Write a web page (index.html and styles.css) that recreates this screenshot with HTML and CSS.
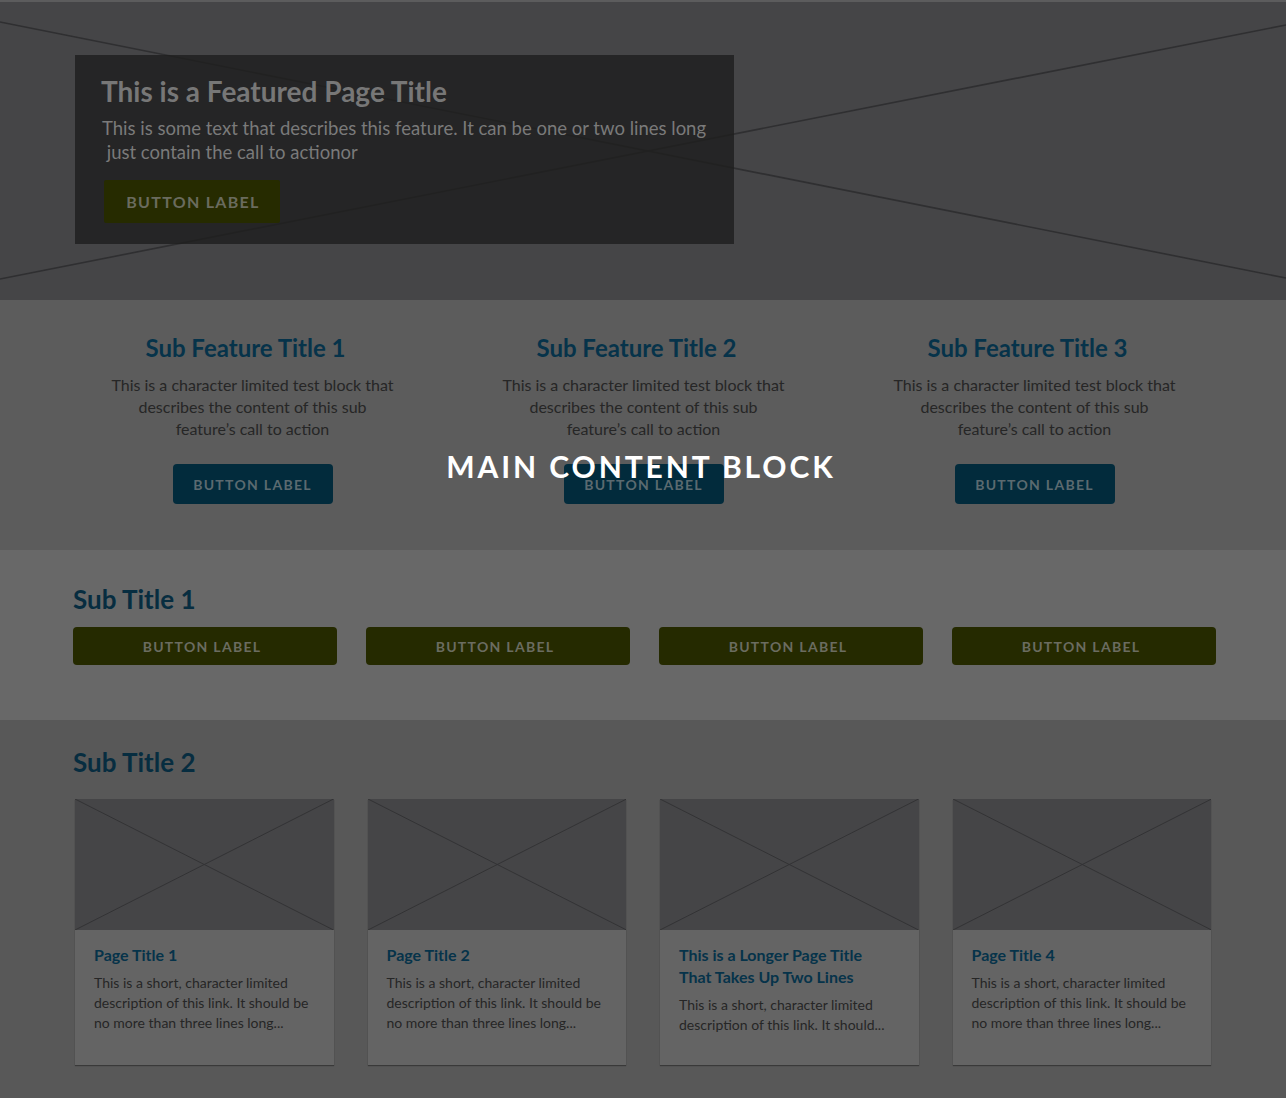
FILE: index.html
```html
<!DOCTYPE html>
<html lang="en">
<head>
<meta charset="utf-8">
<title>Wireframe</title>
<link rel="stylesheet" href="styles.css">
</head>
<body>
<div class="page">
  <div class="topline"></div>
  <section class="hero">
    <svg class="hero-x" viewBox="0 0 1286 298" preserveAspectRatio="none" aria-hidden="true">
      <line x1="0" y1="20" x2="1286" y2="276"/>
      <line x1="0" y1="277" x2="1286" y2="23"/>
    </svg>
    <div class="feature">
      <h1 class="feature-title">This is a Featured Page Title</h1>
      <p class="feature-text">This is some text that describes this feature. It can be one or two lines long<br>&nbsp;just contain the call to actionor</p>
      <a class="btn btn-hero">BUTTON LABEL</a>
    </div>
  </section>

  <section class="subfeatures">
    <div class="sf">
      <h2 class="sf-title">Sub Feature Title 1</h2>
      <p class="sf-text">This is a character limited test block that<br>describes the content of this sub<br>feature’s call to action</p>
      <a class="btn btn-blue">BUTTON LABEL</a>
    </div>
    <div class="sf">
      <h2 class="sf-title">Sub Feature Title 2</h2>
      <p class="sf-text">This is a character limited test block that<br>describes the content of this sub<br>feature’s call to action</p>
      <a class="btn btn-blue">BUTTON LABEL</a>
    </div>
    <div class="sf">
      <h2 class="sf-title">Sub Feature Title 3</h2>
      <p class="sf-text">This is a character limited test block that<br>describes the content of this sub<br>feature’s call to action</p>
      <a class="btn btn-blue">BUTTON LABEL</a>
    </div>
  </section>

  <section class="links">
    <h2 class="sub-title">Sub Title 1</h2>
    <div class="link-row">
      <a class="btn btn-green">BUTTON LABEL</a>
      <a class="btn btn-green">BUTTON LABEL</a>
      <a class="btn btn-green">BUTTON LABEL</a>
      <a class="btn btn-green">BUTTON LABEL</a>
    </div>
  </section>

  <section class="cards-section">
    <h2 class="sub-title sub-title-2">Sub Title 2</h2>
    <div class="cards">
      <div class="card">
        <div class="card-img"><svg viewBox="0 0 100 100" preserveAspectRatio="none" aria-hidden="true"><line x1="0" y1="0" x2="100" y2="100"/><line x1="0" y1="100" x2="100" y2="0"/></svg></div>
        <div class="card-body">
          <h3 class="card-title">Page Title 1</h3>
          <p class="card-text">This is a short, character limited description of this link. It should be no more than three lines long...</p>
        </div>
      </div>
      <div class="card">
        <div class="card-img"><svg viewBox="0 0 100 100" preserveAspectRatio="none" aria-hidden="true"><line x1="0" y1="0" x2="100" y2="100"/><line x1="0" y1="100" x2="100" y2="0"/></svg></div>
        <div class="card-body">
          <h3 class="card-title">Page Title 2</h3>
          <p class="card-text">This is a short, character limited description of this link. It should be no more than three lines long...</p>
        </div>
      </div>
      <div class="card">
        <div class="card-img"><svg viewBox="0 0 100 100" preserveAspectRatio="none" aria-hidden="true"><line x1="0" y1="0" x2="100" y2="100"/><line x1="0" y1="100" x2="100" y2="0"/></svg></div>
        <div class="card-body">
          <h3 class="card-title">This is a Longer Page Title<br>That Takes Up Two Lines</h3>
          <p class="card-text">This is a short, character limited<br>description of this link. It should...</p>
        </div>
      </div>
      <div class="card">
        <div class="card-img"><svg viewBox="0 0 100 100" preserveAspectRatio="none" aria-hidden="true"><line x1="0" y1="0" x2="100" y2="100"/><line x1="0" y1="100" x2="100" y2="0"/></svg></div>
        <div class="card-body">
          <h3 class="card-title">Page Title 4</h3>
          <p class="card-text">This is a short, character limited description of this link. It should be no more than three lines long...</p>
        </div>
      </div>
    </div>
  </section>

  <div class="overlay-label">MAIN CONTENT BLOCK</div>
</div>
</body>
</html>
```

FILE: styles.css
```css
* { box-sizing: border-box; }
html, body { margin: 0; padding: 0; }
body {
  background: #585858;
  font-family: Lato, "Open Sans", "Liberation Sans", sans-serif;
  color: #282828;
}
.page { position: relative; width: 1286px; overflow: hidden; }
h1, h2, h3, p { margin: 0; }
a { text-decoration: none; }

.topline { height: 2px; background: #5c5c5d; }

/* hero */
.hero {
  position: relative;
  height: 298px;
  background: #454547;
  padding-top: 53px;
  padding-left: 75px;
}
.hero-x {
  position: absolute;
  left: 0; top: 0;
  width: 100%; height: 100%;
}
.hero-x line { stroke: #2f2f31; stroke-width: 1.6; }
.feature {
  position: relative;
  width: 659px;
  height: 189px;
  background: rgba(30, 30, 30, 0.82);
  padding: 19px 0 0 27px;
}
.feature-title {
  font-size: 28px;
  line-height: 34px;
  font-weight: 700;
  color: #777777;
  margin-left: -1px;
}
.feature-text {
  margin-top: 8px;
  font-size: 18.5px;
  line-height: 24px;
  color: #7a7a7a;
}
.btn {
  display: flex;
  align-items: center;
  justify-content: center;
  font-weight: 700;
  letter-spacing: 1.3px;
  white-space: nowrap;
}
.btn-hero {
  margin-top: 16px;
  margin-left: 2px;
  width: 176px;
  height: 43px;
  background: #262b00;
  border-radius: 2px;
  font-size: 16px;
  color: #6a6b5e;
  padding-left: 2px;
}

/* sub features */
.subfeatures {
  height: 250px;
  background: #5c5c5c;
  padding: 33px 0 0 57px;
  display: grid;
  grid-template-columns: repeat(3, 391px);
  align-items: start;
}
.sf { display: flex; flex-direction: column; align-items: center; text-align: center; }
.sf-title {
  font-size: 24px;
  line-height: 30px;
  font-weight: 700;
  color: #06334a;
  padding-right: 14px;
}
.sf-text {
  margin-top: 11px;
  font-size: 16px;
  line-height: 22px;
  color: #262626;
}
.btn-blue {
  margin-top: 24px;
  width: 160px;
  height: 40px;
  background: #022b3c;
  border-radius: 4px;
  font-size: 14px;
  color: #5b6a70;
}

/* links */
.links {
  height: 170px;
  background: #686868;
  padding: 33px 0 0 73px;
}
.sub-title {
  font-size: 26px;
  line-height: 32px;
  font-weight: 700;
  color: #072d40;
}
.link-row {
  margin-top: 12px;
  display: grid;
  grid-template-columns: repeat(4, 264px);
  column-gap: 29px;
}
.btn-green {
  height: 38px;
  background: #252a00;
  border-radius: 4px;
  font-size: 14px;
  color: #6b6c60;
  padding-right: 6px;
}

/* cards */
.cards-section {
  background: #585858;
  padding: 26px 0 34px 73px;
}
.sub-title-2 { margin-bottom: 21px; }
.cards {
  margin-left: 2px;
  display: grid;
  grid-template-columns: repeat(4, 258.5px);
  column-gap: 34px;
}
.card {
  display: flex;
  flex-direction: column;
  box-shadow: 0 1px 1px rgba(0, 0, 0, 0.35);
}
.card-img {
  height: 131px;
  background: #454547;
}
.card-img svg { display: block; width: 100%; height: 100%; }
.card-img line { stroke: #333335; stroke-width: 1; vector-effect: non-scaling-stroke; }
.card-body {
  flex: 1;
  background: #646464;
  padding: 14px 19px 30px 19px;
}
.card-title {
  font-size: 16px;
  line-height: 22px;
  font-weight: 700;
  color: #06334a;
}
.card-text {
  margin-top: 7px;
  font-size: 14px;
  line-height: 20px;
  color: #262626;
}

.overlay-label {
  position: absolute;
  left: 0; right: 4px;
  top: 447px;
  text-align: center;
  font-size: 30px;
  line-height: 38px;
  font-weight: 700;
  letter-spacing: 2.9px;
  color: #ffffff;
}
```
